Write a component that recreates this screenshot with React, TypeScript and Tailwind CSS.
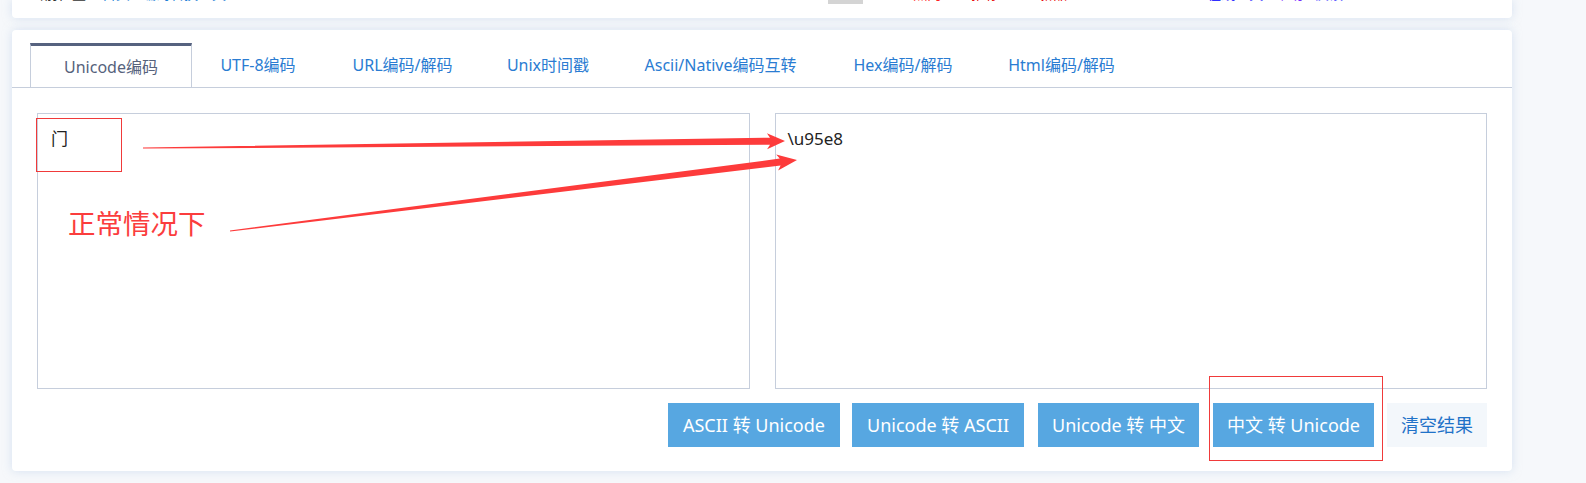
import React from "react";

type Pt = [number, number];

// arrow drawn as one filled polygon: thin tail, widening shaft, triangular head
function arrowPoints(tail: Pt, tip: Pt, shaft: number, headLen: number, headW: number) {
    const dx = tip[0] - tail[0];
    const dy = tip[1] - tail[1];
    const len = Math.hypot(dx, dy);
    const ux = dx / len;
    const uy = dy / len;
    const nx = -uy;
    const ny = ux;
    const bx = tip[0] - ux * headLen;
    const by = tip[1] - uy * headLen;
    const pts: Pt[] = [
        [tail[0] + nx * 0.6, tail[1] + ny * 0.6],
        [bx + nx * shaft / 2, by + ny * shaft / 2],
        [bx - ux * 3 + nx * headW / 2, by - uy * 3 + ny * headW / 2],
        tip,
        [bx - ux * 3 - nx * headW / 2, by - uy * 3 - ny * headW / 2],
        [bx - nx * shaft / 2, by - ny * shaft / 2],
        [tail[0] - nx * 0.6, tail[1] - ny * 0.6],
    ];
    return pts.map((p) => p.map((v) => v.toFixed(1)).join(",")).join(" ");
}

const tabs = [
    { label: "Unicode编码", w: "w-[162px]", active: true },
    { label: "UTF-8编码", w: "w-[132px]" },
    { label: "URL编码/解码", w: "w-[157px]" },
    { label: "Unix时间戳", w: "w-[134px]" },
    { label: "Ascii/Native编码互转", w: "w-[211px]" },
    { label: "Hex编码/解码", w: "w-[154px]" },
    { label: "Html编码/解码", w: "w-[163px]" },
];

export default function App() {
    return (
        <div className="relative w-[1586px] h-[483px] overflow-hidden bg-[#f6f8fb] font-['Noto_Sans','Noto_Sans_CJK_SC',sans-serif]">
            <div className="w-[1500px] ml-[12px]">
                {/* top card, only its lower edge is in view */}
                <div className="h-[18px] bg-white rounded-b-[4px] shadow-[0_0_10px_rgba(186,206,232,0.55)] overflow-hidden">
                    <div className="-mt-[16px] flex items-start text-[14px] leading-[20px] whitespace-nowrap">
                        <span className="ml-[18px] text-[#333]">当前位置</span>
                        <span className="ml-[16px] text-[#1e7fd6]">首页</span>
                        <span className="ml-[12px] text-[#1e7fd6]">编码转换工具</span>
                        <span className="ml-[12px] text-[#1e7fd6]">Unicode</span>
                        <span className="ml-[536px] w-[35px] h-[20px] bg-[#d4d4d4]" />
                        <span className="ml-[50px] text-[#ff2020]">热门</span>
                        <span className="ml-[30px] text-[#e80000]">推荐</span>
                        <span className="ml-[40px] text-[#e80000]">新品</span>
                        <span className="ml-[140px] text-[#3030ff]">在线工具</span>
                        <span className="ml-[12px] text-[#7a2cff]">帮助</span>
                        <span className="ml-[12px] text-[#3030ff]">反馈</span>
                    </div>
                </div>

                <div className="mt-[12px] bg-white rounded-[4px] shadow-[0_0_10px_rgba(186,206,232,0.55)]">
                    <div className="pt-[13px] px-[18px] flex border-b border-[#c6cedc]">
                        {tabs.map((t) => (
                            <div
                                key={t.label}
                                className={
                                    t.active
                                        ? `${t.w} h-[44px] -mb-px flex items-center justify-center bg-white border-x border-[#c6cedc] border-t-[3px] border-t-[#56627f] text-[16px] text-[#56627c]`
                                        : `${t.w} h-[44px] flex items-center justify-center text-[16px] text-[#2a7cd2]`
                                }
                            >
                                {t.label}
                            </div>
                        ))}
                    </div>

                    <div className="px-[25px] pt-[25px] pb-[24px]">
                        <div className="grid grid-cols-2 gap-[25px]">
                            <textarea
                                defaultValue="门"
                                className="h-[276px] resize-none border border-[#c6cedc] px-[13px] pt-[12px] text-[17px] leading-[1.5] text-[#222] outline-none"
                            />
                            <textarea
                                defaultValue="\u95e8"
                                className="h-[276px] resize-none border border-[#c6cedc] px-[12px] pt-[12px] text-[17px] leading-[1.5] text-[#222] outline-none"
                            />
                        </div>

                        <div className="mt-[14px] flex justify-end text-[18px]">
                            <button className="w-[172px] h-[44px] bg-[#57a7e1] text-white">ASCII 转 Unicode</button>
                            <button className="ml-[12px] w-[172px] h-[44px] bg-[#57a7e1] text-white">Unicode 转 ASCII</button>
                            <button className="ml-[14px] w-[161px] h-[44px] bg-[#57a7e1] text-white">Unicode 转 中文</button>
                            <button className="ml-[14px] w-[161px] h-[44px] bg-[#57a7e1] text-white">中文 转 Unicode</button>
                            <button className="ml-[13px] w-[100px] h-[44px] bg-[#f3f7fb] text-[#1f72c8]">清空结果</button>
                        </div>
                    </div>
                </div>
            </div>

            {/* red annotations laid over the screenshot */}
            <div className="absolute left-[36px] top-[118px] w-[86px] h-[54px] border border-[#f03a3a]" />
            <div className="absolute left-[1209px] top-[376px] w-[174px] h-[85px] border border-[#f03a3a]" />
            <div className="absolute left-[68px] top-[209px] text-[27.5px] leading-none text-[#fb3d3d] font-['Noto_Sans_CJK_SC',sans-serif]">
                正常情况下
            </div>
            <svg className="absolute inset-0 pointer-events-none" width="1586" height="483">
                <polygon points={arrowPoints([143, 148], [785, 141], 7, 15, 16)} fill="#fd3b3b" />
                <polygon points={arrowPoints([230, 231], [797, 160], 7, 17, 16)} fill="#fd3b3b" />
            </svg>
        </div>
    );
}
